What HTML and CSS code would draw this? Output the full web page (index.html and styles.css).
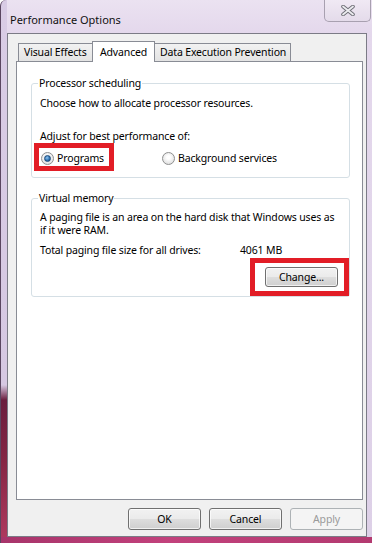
FILE: index.html
```html
<!DOCTYPE html>
<html lang="en">
<head>
  <meta charset="UTF-8">
  <title>Performance Options</title>
  <link rel="stylesheet" href="styles.css">
</head>
<body>
  <div class="window">
    <div class="titlebar">
      <span class="title">Performance Options</span>
      <span class="close">
        <svg width="14" height="11" viewBox="0 0 14 11">
          <path d="M2 1.5 L12 9.5 M12 1.5 L2 9.5" stroke="#6c6c74" stroke-width="3.6" stroke-linecap="round"/>
          <path d="M2 1.5 L12 9.5 M12 1.5 L2 9.5" stroke="#ececf0" stroke-width="1.8" stroke-linecap="round"/>
        </svg>
      </span>
    </div>
    <div class="client">
      <div class="tabs">
        <span class="tab tab-visual">Visual Effects</span>
        <span class="tab tab-adv active">Advanced</span>
        <span class="tab tab-dep">Data Execution Prevention</span>
      </div>
      <div class="panel">
        <fieldset class="group sched">
          <legend>Processor scheduling</legend>
          <p class="line">Choose how to allocate processor resources.</p>
          <p class="line adjust">Adjust for best performance of:</p>
          <div class="radios">
            <span class="mark mark-radio">
              <label class="radio"><span class="dot checked"></span>Programs</label>
            </span>
            <label class="radio"><span class="dot"></span>Background services</label>
          </div>
        </fieldset>
        <fieldset class="group vm">
          <legend>Virtual memory</legend>
          <p class="line desc">A paging file is an area on the hard disk that Windows uses as<br>if it were RAM.</p>
          <div class="total">
            <span>Total paging file size for all drives:</span>
            <span>4061 MB</span>
          </div>
          <div class="change-row">
            <span class="mark mark-btn"><button class="btn">Change...</button></span>
          </div>
        </fieldset>
      </div>
      <div class="actions">
        <button class="btn">OK</button>
        <button class="btn">Cancel</button>
        <button class="btn" disabled>Apply</button>
      </div>
    </div>
  </div>
</body>
</html>
```

FILE: styles.css
```css
body {
  margin: 0;
  font-family: "Noto Sans", sans-serif;
  font-size: 10.5px;
  letter-spacing: -0.15px;
  color: #000;
}
.window {
  width: 372px;
  height: 543px;
  box-sizing: border-box;
  display: flex;
  flex-direction: column;
  border-left: 1px solid #5a4660;
  border-radius: 6px 0 0 0;
  overflow: hidden;
  background:
    linear-gradient(90deg, #a7346a 0, #c2417c 45%, #b33a70 100%) left bottom / 100% 6px no-repeat,
    linear-gradient(#d9cce5 0, #d6c8e2 385px, #6a1e3e 400px, #842644 460px, #b03a60 543px) left top / 6px 100% no-repeat,
    linear-gradient(#ebe2f1 0, #e4d8ec 33px, #ddd0e7 100%);
}
.titlebar {
  height: 33px;
  display: flex;
  justify-content: space-between;
  align-items: flex-start;
}
.title {
  font-size: 11px;
  letter-spacing: 0;
  margin: 13px 0 0 9px;
  line-height: 14px;
  color: #111;
}
.close {
  width: 47px;
  height: 22px;
  box-sizing: border-box;
  border: 1px solid #a8a0b0;
  border-top: none;
  border-radius: 0 0 5px 5px;
  background: linear-gradient(#f0e9f4, #e4dbea);
  display: flex;
  justify-content: center;
  align-items: center;
  margin-right: 1px;
}
.client {
  flex: 1;
  margin: 0 5px 6px 6px;
  border: 1px solid #7b7b86;
  background: #f0f0f0;
  display: flex;
  flex-direction: column;
  padding: 7px 3px 0 8px;
}
.tabs {
  display: flex;
  align-items: flex-end;
  height: 21px;
  margin-bottom: -1px;
  padding-left: 2px;
  position: relative;
  z-index: 1;
}
.tab {
  box-sizing: border-box;
  height: 18px;
  margin-bottom: 1px;
  border: 1px solid #898c95;
  border-bottom: none;
  background: linear-gradient(#f2f2f2, #e3e3e3);
  line-height: 16px;
  padding-left: 5px;
  white-space: nowrap;
}
.tab + .tab {
  margin-left: -1px;
}
.tab-visual { width: 75px; }
.tab-adv { width: 63px; }
.tab-dep { width: 137px; }
.tab.active {
  height: 21px;
  margin-bottom: 0;
  background: #fff;
  line-height: 20px;
  padding-left: 7px;
}
.panel {
  flex: 1;
  background: #fff;
  border: 1px solid #898c95;
  padding: 14px 12px 0 14px;
}
.group {
  margin: 0;
  border: 1px solid #d5dfe5;
  border-radius: 3px;
  padding: 0 8px 12px 8px;
}
.group legend {
  padding: 0 1px;
  margin-left: -2px;
  line-height: 14px;
}
.line {
  margin: 6px 0 0;
  line-height: 14px;
  white-space: nowrap;
}
.adjust {
  margin-top: 19px;
}
.radios {
  display: grid;
  grid-template-columns: 121px auto;
  margin-top: 8px;
  line-height: 14px;
}
.radio {
  display: inline-flex;
  align-items: center;
  margin-left: 1px;
}
.dot {
  width: 11px;
  height: 11px;
  border-radius: 50%;
  border: 1px solid #8e8f8f;
  background: radial-gradient(circle at 50% 40%, #ffffff 20%, #d4d4d4 100%);
  margin-right: 3px;
  display: flex;
  justify-content: center;
  align-items: center;
}
.dot.checked::after {
  content: "";
  width: 5px;
  height: 5px;
  border-radius: 50%;
  border: 1px solid #1b4a7a;
  background: radial-gradient(circle at 40% 35%, #8fc4f0 0, #2b6fae 60%, #0e3d6e 100%);
}
.mark {
  outline: 5px solid #e21d26;
}
.mark-radio {
  display: inline-flex;
  padding: 3px 5px 1px 1px;
  margin: -3px 0 -1px -1px;
  justify-self: start;
}
.vm {
  margin-top: 13px;
  padding-bottom: 9px;
}
.desc {
  line-height: 13px;
}
.total {
  display: grid;
  grid-template-columns: 200px auto;
  margin-top: 6px;
  line-height: 14px;
}
.change-row {
  display: flex;
  justify-content: flex-end;
  margin-top: 10px;
  padding-right: 3px;
}
.mark-btn {
  display: inline-flex;
  padding: 4px 6px 4px 10px;
  margin: -4px -6px -4px -10px;
}
.btn {
  font: inherit;
  letter-spacing: inherit;
  width: 73px;
  height: 20px;
  padding: 0;
  border: 1px solid #707070;
  border-radius: 3px;
  color: #000;
  background: linear-gradient(#f2f2f2 0, #ebebeb 48%, #dddddd 52%, #cfcfcf 100%);
  box-shadow: inset 0 0 0 1px rgba(255, 255, 255, 0.7);
}
.actions {
  height: 22px;
  margin: 8px 0 6px;
  display: flex;
  justify-content: flex-end;
  gap: 8px;
}
.actions .btn {
  height: 22px;
}
.btn:disabled {
  border-color: #adb2b5;
  background: #f4f4f4;
  color: #9a9a9a;
  box-shadow: none;
}
```
